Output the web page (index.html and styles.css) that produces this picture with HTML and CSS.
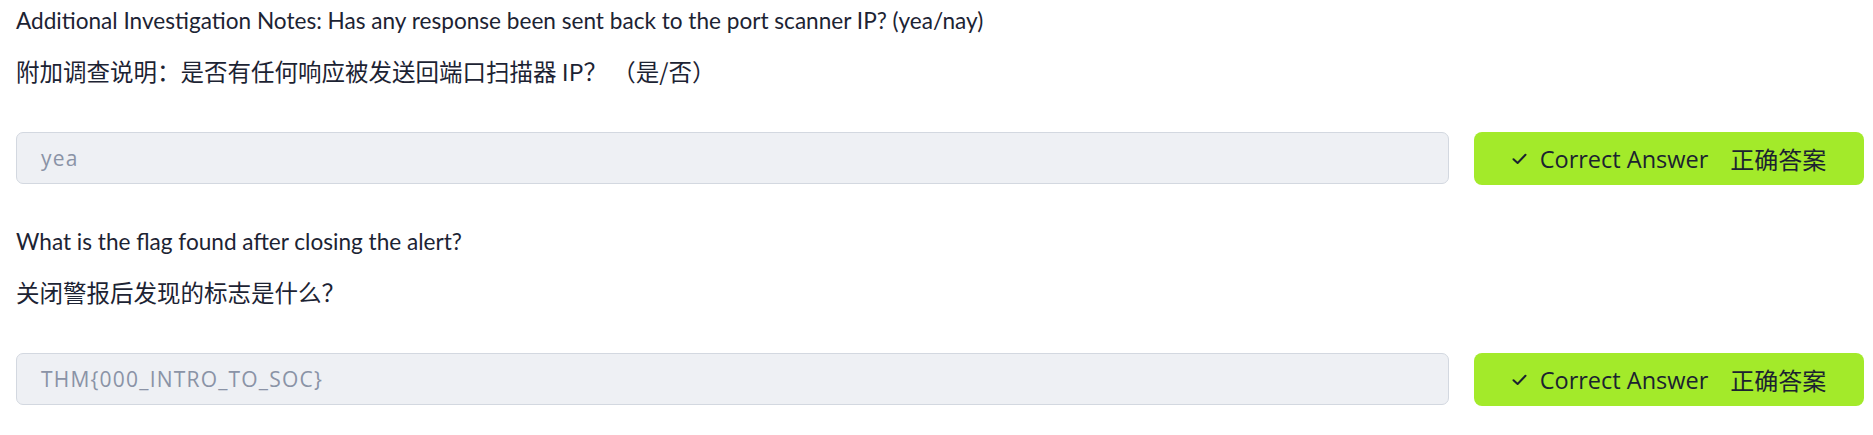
FILE: index.html
```html
<!DOCTYPE html>
<html lang="en">
<head>
<meta charset="utf-8">
<link rel="stylesheet" href="styles.css">
</head>
<body>
<div class="page">
  <section class="task">
    <p class="q">Additional Investigation Notes: Has any response been sent back to the port scanner IP? (yea/nay)</p>
    <p class="q zh">附加调查说明：是否有任何响应被发送回端口扫描器 IP？ （是/否）</p>
    <div class="row">
      <div class="answer">yea</div>
      <button class="btn"><svg class="check" width="15" height="12" viewBox="0 0 15 12"><path d="M1.5 6.2 L5.6 10 L13.5 1.8" fill="none" stroke="#1b2230" stroke-width="2" stroke-linecap="round" stroke-linejoin="round"/></svg><span class="en">Correct Answer</span><span class="cn">正确答案</span></button>
    </div>
  </section>
  <section class="task">
    <p class="q">What is the flag found after closing the alert?</p>
    <p class="q zh">关闭警报后发现的标志是什么？</p>
    <div class="row">
      <div class="answer">THM{000_INTRO_TO_SOC}</div>
      <button class="btn"><svg class="check" width="15" height="12" viewBox="0 0 15 12"><path d="M1.5 6.2 L5.6 10 L13.5 1.8" fill="none" stroke="#1b2230" stroke-width="2" stroke-linecap="round" stroke-linejoin="round"/></svg><span class="en">Correct Answer</span><span class="cn">正确答案</span></button>
    </div>
  </section>
</div>
</body>
</html>
```
FILE: styles.css
```css
html, body {
  margin: 0;
  padding: 0;
  background: #ffffff;
}
.page {
  width: 1848px;
  padding-left: 16px;
  font-family: "Lato", "Noto Sans CJK SC", sans-serif;
  color: #1c2333;
}
.task {
  padding-top: 6px;
  padding-bottom: 36px;
}
.q {
  margin: 0;
  font-size: 22.6px;
  line-height: 30px;
}
.zh {
  margin-top: 20px;
  font-family: "Noto Sans CJK SC", sans-serif;
  font-size: 23.5px;
}
.row {
  display: flex;
  gap: 25px;
  margin-top: 46px;
}
.answer {
  flex: 1;
  height: 52px;
  box-sizing: border-box;
  background: #eef0f4;
  border: 1px solid #d3d8e0;
  border-radius: 7px;
  padding-left: 24px;
  display: flex;
  align-items: center;
  font-family: "Open Sans", sans-serif;
  font-size: 21px;
  letter-spacing: 1.2px;
  color: #8a93a6;
}
.btn {
  width: 390px;
  height: 53px;
  border: none;
  border-radius: 8px;
  background: #a3ea2a;
  display: flex;
  align-items: center;
  justify-content: center;
  color: #1b2230;
  font-family: "Open Sans", sans-serif;
  font-size: 23.5px;
  padding: 0;
}
.check {
  margin-right: 13px;
}
.en {
  margin-right: 22px;
}
.cn {
  font-family: "Noto Sans CJK SC", sans-serif;
  font-size: 24px;
}
```
